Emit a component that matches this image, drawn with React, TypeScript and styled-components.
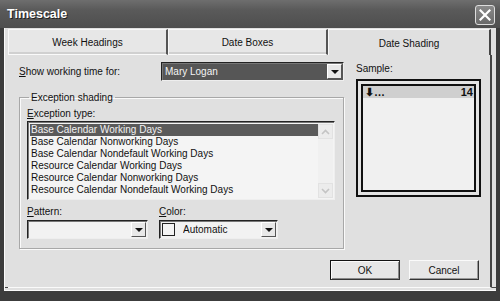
import React from 'react';
import styled, { createGlobalStyle } from 'styled-components';

const GlobalStyle = createGlobalStyle`
  html, body {
    margin: 0;
    padding: 0;
    background: #3c3c3c;
  }
  body {
    font-family: "Liberation Sans", Arial, sans-serif;
    font-size: 10px;
    color: #111;
  }
`;

const exceptionTypes = [
  'Base Calendar Working Days',
  'Base Calendar Nonworking Days',
  'Base Calendar Nondefault Working Days',
  'Resource Calendar Working Days',
  'Resource Calendar Nonworking Days',
  'Resource Calendar Nondefault Working Days',
];

const tabs = [
  { label: 'Week Headings', width: 160 },
  { label: 'Date Boxes', width: 160 },
  { label: 'Date Shading', width: 163 },
];

export default function App() {
  return (
    <>
      <GlobalStyle />
      <Window>
        <TitleBar>
          <Title>Timescale</Title>
          <CloseButton>
            <svg width="12" height="12" viewBox="0 0 12 12">
              <path d="M1.5 1.5 L10.5 10.5 M10.5 1.5 L1.5 10.5" stroke="#fff" strokeWidth="2.2" strokeLinecap="square" />
            </svg>
          </CloseButton>
        </TitleBar>
        <Body>
          <TabStrip>
            {tabs.map((t, i) => (
              <Tab key={t.label} $active={i === 2} $width={t.width}>
                {t.label}
              </Tab>
            ))}
          </TabStrip>
          <Panel>
            <Columns>
              <LeftColumn>
                <FieldRow>
                  <Label>
                    <u>S</u>how working time for:
                  </Label>
                  <Combo $width={183} $dark>
                    <ComboText>Mary Logan</ComboText>
                    <DropButton><Arrow /></DropButton>
                  </Combo>
                </FieldRow>
                <Group>
                  <Legend>Exception shading</Legend>
                  <Label>
                    <u>E</u>xception type:
                  </Label>
                  <ListBox>
                    <ListItems>
                      {exceptionTypes.map((t, i) => (
                        <ListItem key={t} $selected={i === 0}>{t}</ListItem>
                      ))}
                    </ListItems>
                    <ScrollBar>
                      <ScrollBtn>
                        <svg width="9" height="6" viewBox="0 0 9 6"><path d="M1 5 L4.5 1.5 L8 5" stroke="#c4c4c4" strokeWidth="1.6" fill="none" /></svg>
                      </ScrollBtn>
                      <ScrollBtn>
                        <svg width="9" height="6" viewBox="0 0 9 6"><path d="M1 1 L4.5 4.5 L8 1" stroke="#c4c4c4" strokeWidth="1.6" fill="none" /></svg>
                      </ScrollBtn>
                    </ScrollBar>
                  </ListBox>
                  <PickerRow>
                    <Picker>
                      <Label><u>P</u>attern:</Label>
                      <Combo $width={121}>
                        <ComboText />
                        <DropButton><Arrow /></DropButton>
                      </Combo>
                    </Picker>
                    <Picker>
                      <Label><u>C</u>olor:</Label>
                      <Combo $width={119}>
                        <Swatch />
                        <ComboText>Automatic</ComboText>
                        <DropButton><Arrow /></DropButton>
                      </Combo>
                    </Picker>
                  </PickerRow>
                </Group>
              </LeftColumn>
              <RightColumn>
                <SampleLabel>Sample:</SampleLabel>
                <SampleBox>
                  <SampleInner>
                    <SampleHeader>
                      <span>⬇…</span>
                      <span>14</span>
                    </SampleHeader>
                  </SampleInner>
                </SampleBox>
              </RightColumn>
            </Columns>
            <Footer>
              <Button $default>OK</Button>
              <Button>Cancel</Button>
            </Footer>
          </Panel>
        </Body>
      </Window>
    </>
  );
}

const Window = styled.div`
  width: 500px;
  height: 301px;
  box-sizing: border-box;
  background: #3c3c3c;
  display: flex;
  flex-direction: column;
  padding: 0 4px 10px 4px;
  overflow: hidden;
`;

const TitleBar = styled.div`
  height: 28px;
  margin: 0 -4px;
  padding: 0 5px 0 7px;
  display: flex;
  align-items: center;
  justify-content: space-between;
  background: linear-gradient(180deg, #6e6e6e 0%, #5a5a5a 35%, #4e4e4e 100%);
`;

const Title = styled.div`
  color: #fff;
  font-family: "Liberation Sans", Arial, sans-serif;
  font-weight: bold;
  font-size: 12.5px;
  text-shadow: 1px 1px 0 #222;
`;

const CloseButton = styled.div`
  width: 18px;
  height: 18px;
  border: 1px solid #ddd;
  border-radius: 3px;
  background: linear-gradient(180deg, #8a8a8a, #6a6a6a);
  display: flex;
  align-items: center;
  justify-content: center;
  margin-top: 1px;
`;

const Body = styled.div`
  flex: 1;
  background: #e0e0e0;
  border-left: 1px solid #fafafa;
  border-bottom: 1px solid #fafafa;
  box-shadow: inset 0 -2px 0 #e0e0e0, inset 0 -3px 0 #444;
  display: flex;
  flex-direction: column;
  padding: 1px 4px 0 3px;
`;

const TabStrip = styled.div`
  display: flex;
  height: 26px;
`;

const Tab = styled.div<{ $active?: boolean; $width: number }>`
  width: ${p => p.$width}px;
  box-sizing: border-box;
  display: flex;
  align-items: center;
  justify-content: center;
  background: ${p => (p.$active ? '#e0e0e0' : '#e7e7e7')};
  border-top: 1px solid #f8f8f8;
  border-left: 1px solid #f8f8f8;
  border-right: ${p => (p.$active ? '2px solid #444' : '2px solid #555')};
  border-bottom: ${p => (p.$active ? 'none' : '1px solid #fafafa')};
  box-shadow: ${p => (p.$active ? 'none' : 'inset 0 -2px 0 #d0d0d0')};
  padding-top: 1px;
  color: #111;
`;

const Panel = styled.div`
  flex: 1;
  display: flex;
  flex-direction: column;
  border-right: 2px solid #444;
  border-bottom: 1px solid #fafafa;
  padding: 7px 8px 4px 11px;
  margin-bottom: 2px;
`;

const Columns = styled.div`
  display: flex;
  gap: 12px;
`;

const LeftColumn = styled.div`
  width: 325px;
  display: flex;
  flex-direction: column;
`;

const RightColumn = styled.div`
  width: 125px;
  display: flex;
  flex-direction: column;
`;

const FieldRow = styled.div`
  display: flex;
  align-items: center;
  justify-content: space-between;
`;

const Label = styled.div`
  color: #111;
  line-height: 13px;
  u {
    text-decoration: underline;
  }
`;

const Combo = styled.div<{ $width: number; $dark?: boolean }>`
  width: ${p => p.$width}px;
  height: 19px;
  box-sizing: border-box;
  display: flex;
  align-items: center;
  border: 1px solid #222;
  border-right-color: #eee;
  border-bottom-color: #eee;
  box-shadow: inset 1px 1px 0 #777;
  background: ${p => (p.$dark ? '#565656' : '#f2f2f2')};
  color: ${p => (p.$dark ? '#f4f4f4' : '#111')};
  padding: 1px 1px 1px 3px;
`;

const ComboText = styled.div`
  flex: 1;
  white-space: nowrap;
  overflow: hidden;
`;

const DropButton = styled.div`
  width: 15px;
  height: 15px;
  box-sizing: border-box;
  background: #e8e8e8;
  border: 1px solid #fff;
  border-right-color: #555;
  border-bottom-color: #555;
  display: flex;
  align-items: center;
  justify-content: center;
`;

const Arrow = styled.div`
  width: 0;
  height: 0;
  border-left: 4px solid transparent;
  border-right: 4px solid transparent;
  border-top: 4px solid #111;
`;

const Group = styled.fieldset`
  margin: 11px 0 0 0;
  height: 157px;
  box-sizing: border-box;
  border: 1px solid #a8a8a8;
  box-shadow: inset 1px 1px 0 #fafafa, 1px 1px 0 #fafafa;
  padding: 4px 8px 8px 7px;
  display: flex;
  flex-direction: column;
`;

const Legend = styled.legend`
  padding: 0 2px;
  margin-left: 2px;
  color: #111;
`;

const ListBox = styled.div`
  margin-top: 1px;
  height: 79px;
  box-sizing: border-box;
  display: flex;
  border: 1px solid #222;
  border-right-color: #eee;
  border-bottom-color: #eee;
  box-shadow: inset 1px 1px 0 #777;
  background: #f4f4f4;
  padding: 2px 1px 1px 2px;
`;

const ListItems = styled.div`
  flex: 1;
  display: flex;
  flex-direction: column;
`;

const ListItem = styled.div<{ $selected?: boolean }>`
  height: 12px;
  line-height: 12px;
  padding-left: 1px;
  white-space: nowrap;
  background: ${p => (p.$selected ? '#5a5a5a' : 'transparent')};
  color: ${p => (p.$selected ? '#f2f2f2' : '#111')};
`;

const ScrollBar = styled.div`
  width: 15px;
  display: flex;
  flex-direction: column;
  justify-content: space-between;
  background: #f0f0f0;
`;

const ScrollBtn = styled.div`
  height: 15px;
  background: #ececec;
  border: 1px solid #e2e2e2;
  box-sizing: border-box;
  display: flex;
  align-items: center;
  justify-content: center;
`;

const PickerRow = styled.div`
  display: flex;
  gap: 11px;
  margin-top: 5px;
`;

const Picker = styled.div`
  display: flex;
  flex-direction: column;
  gap: 2px;
`;

const Swatch = styled.div`
  width: 13px;
  height: 13px;
  box-sizing: border-box;
  border: 1px solid #222;
  background: #f4f4f4;
  margin-right: 8px;
  margin-left: -1px;
`;

const SampleLabel = styled.div`
  line-height: 13px;
  height: 17px;
`;

const SampleBox = styled.div`
  height: 118px;
  box-sizing: border-box;
  border: 2px solid #111;
  padding: 3px;
  background: #e4e4e4;
`;

const SampleInner = styled.div`
  height: 100%;
  box-sizing: border-box;
  border: 2px solid #111;
  background: #f0f0f0;
`;

const SampleHeader = styled.div`
  height: 12px;
  display: flex;
  justify-content: space-between;
  align-items: center;
  background: #cfcfcf;
  padding: 0 1px 0 2px;
  font-weight: bold;
  font-size: 11px;
`;

const Footer = styled.div`
  margin-top: auto;
  display: flex;
  justify-content: flex-end;
  gap: 9px;
  padding-right: 3px;
  padding-bottom: 3px;
`;

const Button = styled.div<{ $default?: boolean }>`
  width: 70px;
  height: 20px;
  box-sizing: border-box;
  display: flex;
  align-items: center;
  justify-content: center;
  background: #e6e6e6;
  border: 1px solid ${p => (p.$default ? '#111' : '#fafafa')};
  border-right-color: #333;
  border-bottom-color: #333;
  box-shadow: ${p => (p.$default ? 'inset 1px 1px 0 #fafafa, inset -1px -1px 0 #888' : 'inset -1px -1px 0 #999')};
  color: #111;
`;
